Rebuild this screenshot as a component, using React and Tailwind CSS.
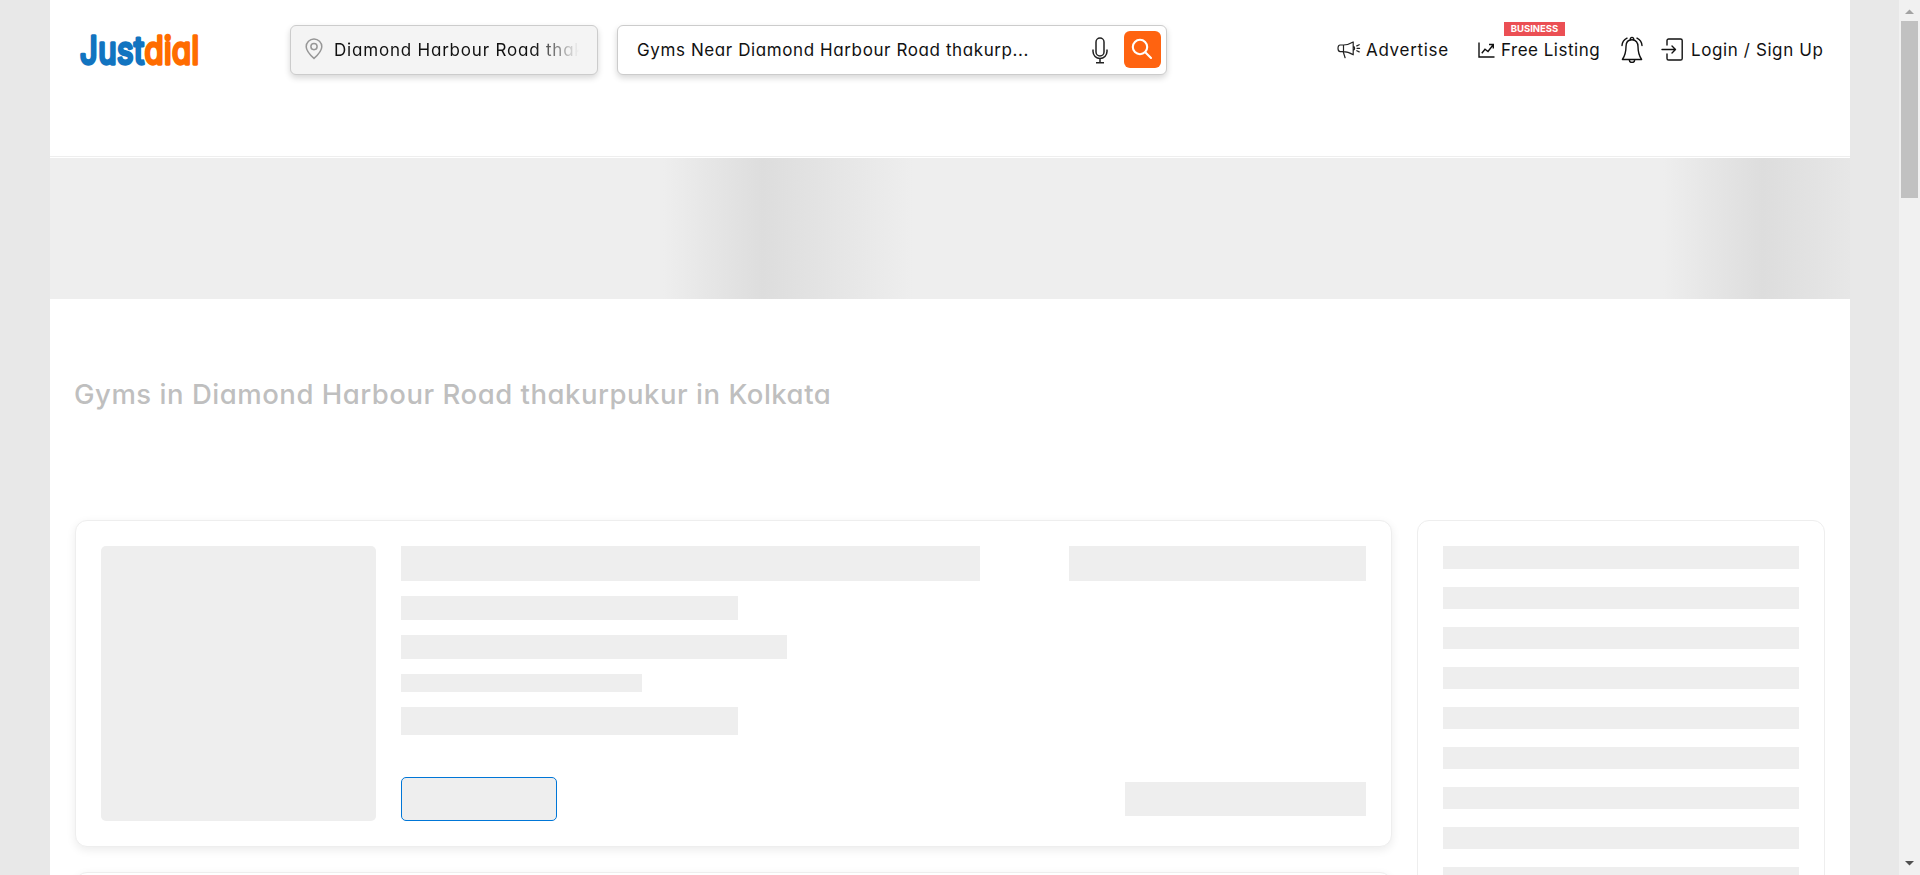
import React from "react";

const FONT = "font-['Inter','Liberation_Sans',sans-serif] [font-feature-settings:'cv11']";

function Logo() {
  return (
    <svg width="130" height="50" viewBox="0 0 130 50" className="shrink-0 overflow-visible" aria-label="Justdial">
      <text
        x="3" y="39" textLength="119.500" lengthAdjust="spacingAndGlyphs"
        fontFamily="Inter, sans-serif" fontWeight="400" fontSize="37.500"
        strokeWidth="3.300" strokeLinejoin="round" strokeLinecap="round" style={{ fontFeatureSettings: "'cv11'" }}
      >
        <tspan fill="#1274c0" stroke="#1274c0">Just</tspan>
        <tspan fill="#ff6c00" stroke="#ff6c00">dial</tspan>
      </text>
    </svg>
  );
}

function PinIcon() {
  return (
    <svg width="18" height="22" viewBox="0 0 18 22" fill="none" stroke="#979797" strokeWidth="1.5" className="relative -top-px shrink-0">
      <path d="M9 20.4C5.8 17.5 1.2 13.2 1.2 8.7a7.8 7.8 0 0 1 15.6 0c0 4.5-4.6 8.8-7.8 11.7Z" />
      <circle cx="9" cy="8.6" r="3.1" />
    </svg>
  );
}

function MicIcon() {
  return (
    <svg width="16" height="27" viewBox="0 0 16 27" fill="none" stroke="#222" strokeWidth="1.5" className="shrink-0">
      <rect x="4" y="1" width="8" height="18" rx="4" />
      <path d="M1 12.5v2a7 7 0 0 0 14 0v-2M8 21.5v4M4 25.8h8" />
    </svg>
  );
}

function MegaphoneIcon() {
  return (
    <svg width="24" height="18" viewBox="0 0 24 18" fill="none" stroke="#222" strokeWidth="1.2" strokeLinejoin="round" strokeLinecap="round" className="shrink-0">
      <path d="M6.500 4H3.200C1.800 4 1 5.200 1 7.300s.8 3.300 2.200 3.300h3.300M6.500 4v6.600M6.500 4C10.500 4 13.500 2.600 16.200 1v12.800C13.500 12.200 10.500 10.600 6.500 10.600M16.200 5.400c1.900.4 1.900 3.400 0 3.800M6.200 10.800l1.900 5.900M19.800 4.900l2.400-1.200M20 7.300h2.600M19.800 9.700l2.400 1.200" />
    </svg>
  );
}

function ChartIcon() {
  return (
    <svg width="17" height="16" viewBox="0 0 17 16" fill="none" stroke="#111" strokeWidth="1.4" className="shrink-0">
      <path d="M1 .5V15h15.500" />
      <path d="M3.800 11.300 7 7.300l3 2.200 5-6.500M11 2.500h4.300V6.500" />
    </svg>
  );
}

function BellIcon() {
  return (
    <svg width="22" height="27" viewBox="0 0 22 27" fill="none" stroke="#111" strokeWidth="1.4" strokeLinecap="round" strokeLinejoin="round" className="relative -top-px shrink-0">
      <path d="M11 3.800c-4 0-6 2.800-6 6.700 0 7-1.400 9.800-3.600 13h19.200c-2.200-3.200-3.600-6-3.600-13 0-3.900-2-6.700-6-6.700Z" />
      <path d="M8.300 23.800a2.700 2.700 0 0 0 5.400 0M9.400 3.600a1.700 1.700 0 1 1 3.200 0M6 2.200C3 3.800 1.200 6.300 1 9.500M16 2.200c3 1.600 4.800 4.100 5 7.300" />
    </svg>
  );
}

function LoginIcon() {
  return (
    <svg width="22" height="23" viewBox="0 0 22 23" fill="none" stroke="#111" strokeWidth="1.4" strokeLinecap="round" strokeLinejoin="round" className="relative -top-px shrink-0">
      <path d="M6 7V2.600C6 1.600 6.700 1 7.600 1h12c.9 0 1.600.6 1.600 1.600v17.800c0 1-.7 1.600-1.600 1.600h-12C6.700 22 6 21.400 6 20.400V16M1 11.500h13.500M11 8l3.500 3.500L11 15" />
    </svg>
  );
}

function SearchIcon() {
  return (
    <svg width="22" height="22" viewBox="0 0 22 22" fill="none" stroke="#fff" strokeWidth="2.100" strokeLinecap="round" className="relative -left-px -top-px">
      <circle cx="9" cy="9" r="7.200" />
      <path d="m14.300 14.300 5.700 5.700" />
    </svg>
  );
}

function Header() {
  return (
    <header className="flex h-[157px] shrink-0 items-start border-b border-[#eee] bg-white text-[17px] tracking-[0.6px] text-[#111]">
      <div className="ml-[27px] mt-[25px]"><Logo /></div>
      <div className="ml-[83px] mt-[25px] flex h-[50px] w-[308px] items-center rounded-[6px] border border-[#ccc] bg-[#f4f4f4] pl-[14px] shadow-[0_3px_6px_rgba(0,0,0,0.16)]">
        <PinIcon />
        <span className="ml-[11px] w-[245px] overflow-hidden whitespace-nowrap bg-linear-to-r from-[#111] from-82% to-transparent bg-clip-text pt-[2px] tracking-[0.8px] text-transparent">
          Diamond Harbour Road thakurpukur
        </span>
      </div>
      <div className="ml-[19px] mt-[25px] flex h-[50px] w-[550px] items-center rounded-[6px] border border-[#ccc] bg-white pl-[19px] pr-[5px] shadow-[0_3px_6px_rgba(0,0,0,0.16)]">
        <span className="w-[455px] whitespace-nowrap pt-[2px]">Gyms Near Diamond Harbour Road thakurp...</span>
        <MicIcon />
        <button className="mb-px ml-auto flex size-[37px] items-center justify-center rounded-[6px] bg-[#ff6310]"><SearchIcon /></button>
      </div>
      <nav className="ml-[170px] mt-[25px] flex h-[50px] items-center whitespace-nowrap">
        <a className="flex w-[141px] items-center gap-[5px]"><MegaphoneIcon /><span className="pt-[2px] tracking-[0.7px]">Advertise</span></a>
        <a className="relative flex w-[143px] items-center gap-[6px]">
          <ChartIcon /><span className="pt-[2px] tracking-[0.5px]">Free Listing</span>
          <span className="absolute -top-[14px] left-[26px] flex h-[14px] w-[61px] items-center justify-center bg-[#eb4f54] text-[9.5px] font-bold tracking-normal text-white">BUSINESS</span>
        </a>
        <BellIcon />
        <a className="ml-[18px] flex items-center gap-[8px]"><LoginIcon /><span className="pt-[2px]">Login / Sign Up</span></a>
      </nav>
    </header>
  );
}

function ListingSkeleton() {
  return (
    <article className="flex h-[327px] shrink-0 gap-[25px] rounded-[12px] border border-[#eee] bg-white p-[25px] shadow-[0_3px_10px_rgba(0,0,0,0.08)]">
      <div className="size-[275px] shrink-0 rounded-[5px] bg-[#eee]" />
      <div className="flex flex-1 justify-between">
        <div className="flex w-[579px] flex-col gap-[15px]">
          <div className="h-[35px] bg-[#eee]" />
          <div className="h-[24px] w-[337px] bg-[#eee]" />
          <div className="h-[24px] w-[386px] bg-[#eee]" />
          <div className="h-[18px] w-[241px] bg-[#eee]" />
          <div className="h-[28px] w-[337px] bg-[#eee]" />
          <div className="mt-auto h-[44px] w-[156px] rounded-[5px] border border-[#0076d7] bg-[#eee]" />
        </div>
        <div className="flex w-[297px] flex-col items-end justify-between pb-[5px]">
          <div className="h-[35px] w-full bg-[#eee]" />
          <div className="h-[34px] w-[241px] bg-[#eee]" />
        </div>
      </div>
    </article>
  );
}

function SidebarSkeleton() {
  return (
    <aside className="flex w-[408px] shrink-0 flex-col gap-[18px] rounded-[12px] border border-[#eee] p-[25px]">
      {Array.from({ length: 14 }, (_, i) => (
        <div key={i} className="h-[22px] shrink-0 bg-[#eee] first:h-[23px]" />
      ))}
    </aside>
  );
}

function Scrollbar() {
  return (
    <div className="flex h-full w-[21px] shrink-0 flex-col items-center justify-between bg-[#f1f1f1]">
      <div className="flex flex-col items-center">
        <svg width="21" height="21" viewBox="0 0 21 21"><path d="M6 14 10.500 9.500 15 14Z" fill="#a3a3a3" /></svg>
        <div className="h-[177px] w-[17px] bg-[#c1c1c1]" />
      </div>
      <svg width="21" height="21" viewBox="0 0 21 21"><path d="M6 7h9l-4.500 4.500Z" fill="#505050" /></svg>
    </div>
  );
}

export default function App() {
  return (
    <div className={`flex h-[875px] w-[1920px] overflow-hidden bg-[#e8e8e8] ${FONT}`}>
      <main className="ml-[50px] mr-[49px] flex h-full w-[1800px] shrink-0 flex-col overflow-hidden bg-white">
        <Header />
        <div className="mt-px h-[141px] shrink-0 bg-[linear-gradient(to_right,#eee_8%,#ddd_18%,#eee_33%)] bg-[length:1000px_100%] bg-[position:533px_0]" />
        <h1 className="ml-[24px] mt-[74px] h-[42px] shrink-0 whitespace-nowrap text-[27.5px] leading-[42px] font-medium tracking-[0.52px] text-[#bfbfbf]">
          Gyms in Diamond Harbour Road thakurpukur in Kolkata
        </h1>
        <div className="ml-[25px] mt-[105px] flex h-[800px] w-[1750px] shrink-0 gap-[25px]">
          <section className="flex w-[1317px] shrink-0 flex-col gap-[25px]">
            <ListingSkeleton />
            <ListingSkeleton />
          </section>
          <SidebarSkeleton />
        </div>
      </main>
      <Scrollbar />
    </div>
  );
}
